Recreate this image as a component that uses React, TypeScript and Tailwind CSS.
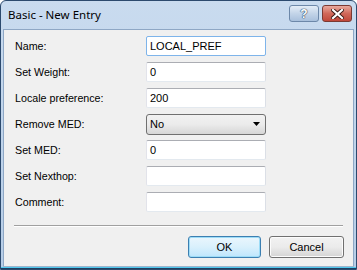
import React from "react";

const labelFont = { fontFamily: '"Liberation Sans", Arial, sans-serif' };

function TextBox({ value, focused }: { value?: string; focused?: boolean }) {
  return (
    <div
      className={
        "h-[20px] w-[120px] bg-white flex items-center px-[3px] text-[11px] text-black rounded-[2px] border " +
        (focused
          ? "border-[#7eb4ea]"
          : "border-t-[#abadb3] border-l-[#e2e3ea] border-r-[#dbdfe6] border-b-[#e3e9ef]")
      }
    >
      {value}
    </div>
  );
}

function Select({ value }: { value: string }) {
  return (
    <div className="h-[21px] w-[120px] flex items-center justify-between pl-[3px] pr-[5px] text-[11px] text-black rounded-[3px] border border-[#707070] bg-gradient-to-b from-[#f2f2f2] via-[#ebebeb] to-[#d6d6d6]">
      <span>{value}</span>
      <svg width="7" height="4" viewBox="0 0 7 4">
        <path d="M0 0 H7 L3.5 4 Z" fill="#000" />
      </svg>
    </div>
  );
}

function Row({ label, children }: { label: string; children: React.ReactNode }) {
  return (
    <div className="flex items-center h-[20px]">
      <div className="w-[131px] text-[10.7px] text-black">{label}</div>
      {children}
    </div>
  );
}

export default function App() {
  return (
    <div style={labelFont} className="w-[357px] h-[270px] relative">
      <div className="w-[357px] h-[270px] flex flex-col rounded-t-[6px] border border-[#2c4a6e] bg-gradient-to-b from-[#c9dbef] to-[#b6cde7] overflow-hidden">
        {/* title bar */}
        <div className="h-[28px] flex items-center pl-[7px] pr-[4px] shrink-0">
          <span
            className="text-[11.5px] text-black flex-1 pb-[1px]"
            style={{ fontFamily: '"Noto Sans", "Open Sans", sans-serif' }}
          >
            Basic - New Entry
          </span>
          <div className="flex gap-[3px] self-start mt-[4px]">
            <div className="w-[30px] h-[17px] rounded-[3px] border border-[#6d88a9] bg-gradient-to-b from-[#e4edf7] via-[#c3d4e8] to-[#a9c0dc] flex items-center justify-center">
              <span className="text-[12px] font-bold text-white" style={{ textShadow: "0 0 1px #2b4566, 0 0 1px #2b4566, 0 0 1px #2b4566" }}>?</span>
            </div>
            <div className="w-[30px] h-[17px] rounded-[3px] border border-[#7b3a33] bg-gradient-to-b from-[#e8a99e] via-[#d0685a] to-[#c0473a] flex items-center justify-center">
              <svg width="13" height="10" viewBox="0 0 13 10">
                <path d="M2 1 L11 9 M11 1 L2 9" stroke="#3b1a16" strokeWidth="4" strokeLinecap="square" />
                <path d="M2 1 L11 9 M11 1 L2 9" stroke="#fff" strokeWidth="2.2" strokeLinecap="square" />
              </svg>
            </div>
          </div>
        </div>
        {/* client */}
        <div className="flex-1 mx-[2px] bg-[#f0f0f0] border border-[#8ea7c5] border-b-0 flex flex-col">
          <div className="flex flex-col gap-[6px] pt-[6px] pl-[11px]">
            <Row label="Name:"><TextBox value="LOCAL_PREF" focused /></Row>
            <Row label="Set Weight:"><TextBox value="0" /></Row>
            <Row label="Locale preference:"><TextBox value="200" /></Row>
            <Row label="Remove MED:"><Select value="No" /></Row>
            <Row label="Set MED:"><TextBox value="0" /></Row>
            <Row label="Set Nexthop:"><TextBox /></Row>
            <Row label="Comment:"><TextBox /></Row>
          </div>
          <div className="mx-[10px] mt-[13px] h-[2px] border-t border-[#a0a0a0] border-b border-b-white" />
          <div className="flex justify-end gap-[8px] pr-[9px] mt-[9px]">
            <div className="w-[73px] h-[22px] rounded-[3px] border border-[#3c7fb1] bg-gradient-to-b from-[#eaf6fd] via-[#d9f0fc] to-[#bee6fd] flex items-center justify-center text-[11px] text-black shadow-[inset_0_0_0_1px_#9ddcf7]">
              OK
            </div>
            <div className="w-[75px] h-[22px] rounded-[3px] border border-[#707070] bg-gradient-to-b from-[#f2f2f2] via-[#ebebeb] to-[#d4d4d4] flex items-center justify-center text-[11px] text-black shadow-[inset_0_0_0_1px_#fcfcfc]">
              Cancel
            </div>
          </div>
        </div>
        <div className="h-[1px] mx-[2px] bg-[#9fb4cc] shrink-0" />
        <div className="h-[1px] bg-[#4fc8ee] shrink-0" />
        <div className="h-[1px] bg-[#1f3d60] shrink-0" />
      </div>
    </div>
  );
}
